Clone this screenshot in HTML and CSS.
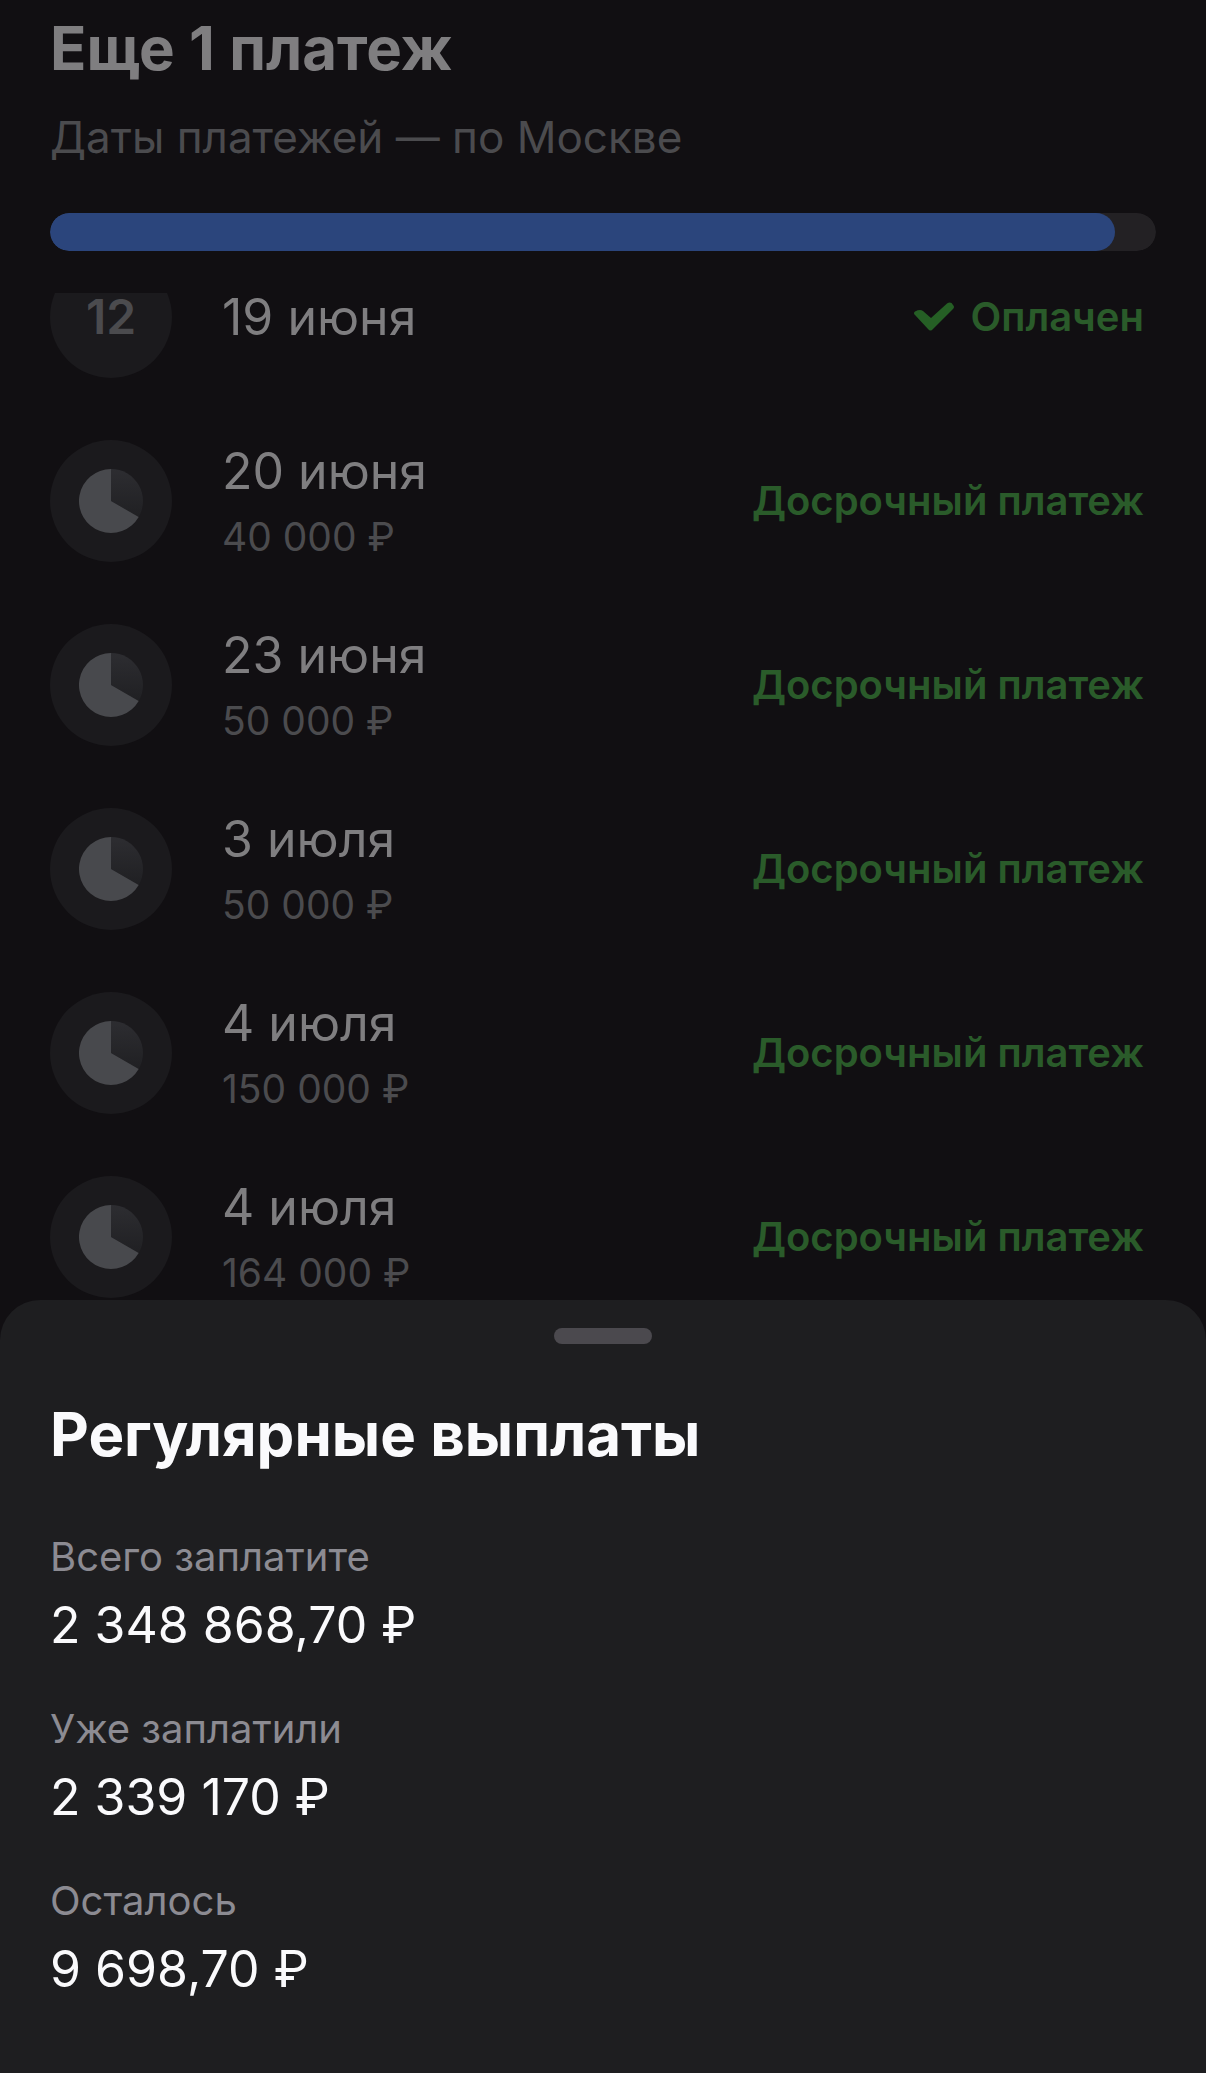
FILE: index.html
```html
<!DOCTYPE html>
<html lang="ru">
<head>
    <meta charset="UTF-8">
    <meta name="viewport" content="width=device-width, initial-scale=1.0">
    <title>Регулярные выплаты</title>
    <link rel="stylesheet" href="styles.css">
</head>
<body>
    <!-- shared pie icon for early payments -->
    <svg class="sprite" aria-hidden="true">
        <defs>
            <linearGradient id="slice" x1="0" y1="0" x2="0" y2="1">
                <stop offset="0" stop-color="#2d2d31"/>
                <stop offset="1" stop-color="#202023"/>
            </linearGradient>
        </defs>
        <symbol id="pie" viewBox="0 0 64 64">
            <path d="M32 32V0a32 32 0 0 1 27.7 48z" fill="url(#slice)"/>
            <path d="M32 32V0a32 32 0 1 0 27.7 48z" fill="#48494d"/>
        </symbol>
    </svg>
    <div class="screen">
        <header class="header">
            <h1 class="title">Еще 1 платеж</h1>
            <p class="subtitle">Даты платежей — по Москве</p>
            <progress class="progress" aria-label="Выплачено" max="1000" value="963"></progress>
        </header>
        <main class="schedule">
            <ul class="payments">
                <li class="payment">
                    <div class="badge">12</div>
                    <div class="info">
                        <div class="date">19 июня</div>
                    </div>
                    <div class="status">
                        <svg class="check" viewBox="0 0 40 30" aria-hidden="true"><path d="M1 13Q-1 11 1 9.500Q6 7 9 9L17 16L33 1.500Q37-1 39 3Q41 5 39 7L19 27Q16.500 30 14 27z"/></svg>
                        Оплачен
                    </div>
                </li>
                <li class="payment">
                    <div class="badge"><svg class="pie"><use href="#pie"/></svg></div>
                    <div class="info">
                        <div class="date">20 июня</div>
                        <div class="amount">40 000 ₽</div>
                    </div>
                    <div class="status">Досрочный платеж</div>
                </li>
                <li class="payment">
                    <div class="badge"><svg class="pie"><use href="#pie"/></svg></div>
                    <div class="info">
                        <div class="date">23 июня</div>
                        <div class="amount">50 000 ₽</div>
                    </div>
                    <div class="status">Досрочный платеж</div>
                </li>
                <li class="payment">
                    <div class="badge"><svg class="pie"><use href="#pie"/></svg></div>
                    <div class="info">
                        <div class="date">3 июля</div>
                        <div class="amount">50 000 ₽</div>
                    </div>
                    <div class="status">Досрочный платеж</div>
                </li>
                <li class="payment">
                    <div class="badge"><svg class="pie"><use href="#pie"/></svg></div>
                    <div class="info">
                        <div class="date">4 июля</div>
                        <div class="amount">150 000 ₽</div>
                    </div>
                    <div class="status">Досрочный платеж</div>
                </li>
                <li class="payment">
                    <div class="badge"><svg class="pie"><use href="#pie"/></svg></div>
                    <div class="info">
                        <div class="date">4 июля</div>
                        <div class="amount">164 000 ₽</div>
                    </div>
                    <div class="status">Досрочный платеж</div>
                </li>
            </ul>
        </main>
        <section class="sheet">
            <div class="handle"></div>
            <h2 class="title">Регулярные выплаты</h2>
            <dl class="totals">
                <div class="total">
                    <dt>Всего заплатите</dt>
                    <dd>2 348 868,70 ₽</dd>
                </div>
                <div class="total">
                    <dt>Уже заплатили</dt>
                    <dd>2 339 170 ₽</dd>
                </div>
                <div class="total">
                    <dt>Осталось</dt>
                    <dd>9 698,70 ₽</dd>
                </div>
            </dl>
        </section>
    </div>
</body>
</html>
```
FILE: styles.css
```css
* {
    box-sizing: border-box;
}
body {
    background-color: #110f12;
    color: #7f7e80;
    font-family: 'Inter', 'Liberation Sans', sans-serif;
    margin: 0;
}
h1, h2, p, ul, dl, dd {
    margin: 0;
    padding: 0;
}
.sprite {
    position: absolute;
    width: 0;
    height: 0;
}
.screen {
    display: flex;
    flex-direction: column;
    height: 100vh;
}
.header {
    padding: 12px 50px 42px;
}
.title {
    font-size: 60px;
    font-weight: 700;
    line-height: 72px;
}
.subtitle {
    color: #4b4b4e;
    font-size: 44px;
    line-height: 56px;
    margin: 25px 0 48px;
}
.progress {
    appearance: none;
    display: block;
    width: 100%;
    height: 38px;
    border: none;
    border-radius: 19px;
    overflow: hidden;
}
.progress::-webkit-progress-bar {
    background-color: #232124;
    border-radius: 19px;
}
.progress::-webkit-progress-value {
    background-color: #2b457c;
    border-radius: 19px;
}
/* the list is scrolled a little, so the first row is cut off */
.schedule {
    flex: 1;
    min-height: 0;
    overflow: hidden;
}
.payments {
    list-style: none;
    margin-top: -68px;
    padding: 0 62px 0 50px;
}
.payment {
    display: flex;
    align-items: center;
    height: 184px;
}
.badge {
    display: flex;
    align-items: center;
    justify-content: center;
    width: 122px;
    height: 122px;
    border-radius: 50%;
    background-color: #1b1a1d;
    color: #4b4b4e;
    font-size: 48px;
    font-weight: 600;
    line-height: 40px;
}
.pie {
    width: 64px;
    height: 64px;
}
.info {
    flex: 1;
    padding-left: 50px;
}
.date {
    font-size: 50px;
    line-height: 40px;
}
.amount {
    color: #4b4b4e;
    font-size: 39px;
    line-height: 28px;
    margin-top: 32px;
}
.status {
    display: flex;
    align-items: center;
    gap: 16px;
    color: #2a5b2a;
    font-size: 40px;
    font-weight: 600;
    line-height: 40px;
}
.check {
    width: 40px;
    height: 30px;
    fill: #255f25;
}
.sheet {
    background-color: #1e1e20;
    border-radius: 40px 40px 0 0;
    padding: 28px 50px 72px;
}
.handle {
    width: 98px;
    height: 16px;
    margin: 0 auto 54px;
    border-radius: 8px;
    background-color: #4b494e;
}
.sheet .title {
    color: #fafafc;
}
.totals {
    display: flex;
    flex-direction: column;
    gap: 46px;
    margin-top: 61px;
}
.total dt {
    color: #8c8b92;
    font-size: 40px;
    line-height: 52px;
    margin-bottom: 10px;
}
.total dd {
    color: #fafafc;
    font-size: 50px;
    line-height: 64px;
}
```
